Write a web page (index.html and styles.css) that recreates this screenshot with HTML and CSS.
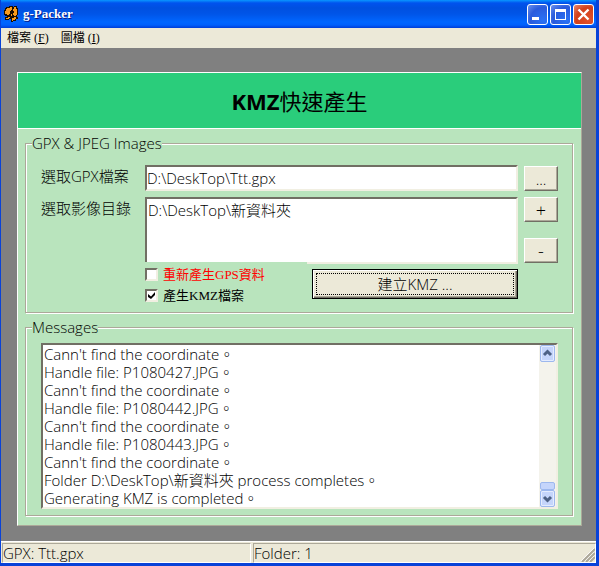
FILE: index.html
```html
<!DOCTYPE html>
<html lang="zh-Hant">
<head>
<meta charset="utf-8">
<meta name="viewport" content="width=device-width, initial-scale=1">
<title>g-Packer</title>
<link rel="stylesheet" href="styles.css">
</head>
<body>
<div class="window">
  <header class="titlebar">
    <svg class="app-icon" viewBox="0 0 16 18" aria-hidden="true">
      <path fill="#1a0d00" d="M1 3h1V2h3V1h4v1h1V1h3v2h1v7h-1v2h1v2h-2v2H9v1H7v-3H5v1H1v-3h2v-1H1v-1H0V5h1z"/>
      <path fill="#f79a1c" d="M2 4h1V3h3V2h2v3H7v1H6v3H5v1H3V9H1V6h1zM10 2h2v2h1v6h-1v1h-2v-1H9V8h1V6H9V4h1zM7 9h1v2H7zM2 13h2v-1h2v1H5v1H2zM8 13h2v-1h2v2h-1v1H9v1H8z"/>
    </svg>
    <h1 class="app-name">g-Packer</h1>
    <div class="window-buttons">
      <button class="win-btn" type="button" aria-label="最小化"><svg viewBox="0 0 21 21"><path fill="#fff" d="M5 13h7v3H5z"/></svg></button>
      <button class="win-btn" type="button" aria-label="最大化"><svg viewBox="0 0 21 21"><path fill="#fff" fill-rule="evenodd" d="M5 5h11v11H5zM6 8v7h9V8z"/></svg></button>
      <button class="win-btn close" type="button" aria-label="關閉"><svg viewBox="0 0 21 21"><path stroke="#fff" stroke-width="2.4" d="M5.500 5.500l10 10M15.500 5.500l-10 10"/></svg></button>
    </div>
  </header>
  <nav class="menubar">
    <button class="menu" type="button">檔案 (<u>F</u>)</button>
    <button class="menu" type="button">圖檔 (<u>I</u>)</button>
  </nav>
  <main class="workspace">
    <div class="panel">
      <h2 class="banner"><b>KMZ</b>快速產生</h2>
      <form class="panel-body">
        <fieldset class="group">
          <legend>GPX &amp; JPEG Images</legend>
          <div class="source-grid">
            <label for="gpx">選取GPX檔案</label>
            <input class="sunken field" id="gpx" type="text" value="D:\DeskTop\Ttt.gpx">
            <button class="btn" type="button">...</button>
            <label for="folders">選取影像目錄</label>
            <select class="sunken folders" id="folders" size="3">
              <option>D:\DeskTop\新資料夾</option>
            </select>
            <div class="stack">
              <button class="btn sign" type="button">+</button>
              <button class="btn sign" type="button">-</button>
            </div>
            <div class="actions">
              <div class="checks">
                <label class="check warn"><input type="checkbox">重新產生GPS資料</label>
                <label class="check"><input type="checkbox" checked>產生KMZ檔案</label>
              </div>
              <button class="btn build" type="button"><span>建立KMZ ...</span></button>
            </div>
          </div>
        </fieldset>
        <fieldset class="group">
          <legend>Messages</legend>
          <div class="sunken log">
            <ul class="lines">
              <li>Cann't find the coordinate。</li>
              <li>Handle file: P1080427.JPG。</li>
              <li>Cann't find the coordinate。</li>
              <li>Handle file: P1080442.JPG。</li>
              <li>Cann't find the coordinate。</li>
              <li>Handle file: P1080443.JPG。</li>
              <li>Cann't find the coordinate。</li>
              <li>Folder D:\DeskTop\新資料夾 process completes。</li>
              <li>Generating KMZ is completed。</li>
            </ul>
            <div class="scrollbar">
              <button class="arrow" type="button" aria-label="向上"><svg viewBox="0 0 13 15"><path d="M3 9l3.500-3.500L10 9"/></svg></button>
              <div class="track"><div class="thumb"></div></div>
              <button class="arrow" type="button" aria-label="向下"><svg viewBox="0 0 13 15"><path d="M3 6l3.500 3.500L10 6"/></svg></button>
            </div>
          </div>
        </fieldset>
      </form>
    </div>
  </main>
  <footer class="statusbar">
    <div class="pane">GPX: Ttt.gpx</div>
    <div class="pane grow">Folder: 1
      <svg class="grip" viewBox="0 0 14 14" aria-hidden="true"><path stroke="#fff" d="M0 13L13 0M4 13l9-9M8 13l5-5"/><path stroke="#aca899" stroke-width="2" d="M1 14L14 1M5 14l9-9M9 14l5-5"/></svg>
    </div>
  </footer>
</div>
</body>
</html>
```

FILE: styles.css
```css
:root {
  --face: #ece9d8;
  --shade: #aca899;
  --dark: #716f64;
  --mint: #b9e4bd;
  --ui: "Open Sans", "Noto Sans CJK TC", sans-serif;
  --serif: "Liberation Serif", "Noto Sans CJK TC", serif;
}

* { box-sizing: border-box; }

body {
  margin: 0;
  font: 300 15px/18px var(--ui);
  color: #000;
}

button, input, select { font: inherit; color: inherit; margin: 0; }

.window {
  display: flex;
  flex-direction: column;
  min-height: 100vh;
  background: #808080;
  border: solid #0842d8;
  border-width: 0 3px 3px 1px;
}

.titlebar {
  display: flex;
  align-items: center;
  height: 28px;
  padding: 0 2px 0 3px;
  background: linear-gradient(#0997ff 0, #0053ee 3px, #0050e0 8px, #0055e8 14px, #0066ff 22px, #0060fc 25px, #003dd7 28px);
}

.app-icon { width: 16px; height: 18px; }

.app-name {
  flex: 1;
  margin: 0 0 0 3px;
  font: bold 13px/18px var(--serif);
  color: #fff;
  text-shadow: 1px 1px #0a1883;
}

.window-buttons { display: flex; gap: 2px; }

.win-btn {
  width: 21px;
  height: 21px;
  padding: 0;
  border: 1px solid #fff;
  border-radius: 3px;
  background: radial-gradient(circle at 80% 80%, #2a72f5, #2a5bdc 60%, #6c93ee);
}
.win-btn.close { background: radial-gradient(circle at 80% 80%, #e0502a, #d2401b 60%, #e88a70); }
.win-btn svg { display: block; width: 21px; height: 21px; margin: -1px; }

.menubar {
  display: flex;
  gap: 12px;
  height: 20px;
  padding-left: 6px;
  background: var(--face);
}
.menu {
  padding: 0;
  border: 0;
  background: none;
  font: 400 12px/20px var(--serif);
}

.workspace {
  flex: 1;
  display: flex;
  padding: 24px 14px 15px 16px;
}

.panel {
  flex: 1;
  background: var(--mint);
  border: 1px solid #fff;
  border-right-color: var(--shade);
  border-bottom-color: var(--shade);
}

.banner {
  margin: 0;
  padding: 14px 0 13px;
  border-bottom: 1px solid #fff;
  background: #2acd7b;
  font: 400 22px/28px var(--ui);
  text-align: center;
}

.panel-body {
  display: flex;
  flex-direction: column;
  gap: 6px;
  padding: 6px 8px 8px 7px;
}

.group {
  min-width: 0;
  margin: 0;
  padding: 7px 14px 6px 15px;
  border: 1px solid var(--shade);
  box-shadow: 1px 1px #fff, inset 1px 1px #fff;
}
.group legend {
  margin-left: -9px;
  padding: 0;
  line-height: 17px;
  background: var(--mint);
}

.source-grid {
  display: grid;
  grid-template-columns: 98px 1fr 34px;
  column-gap: 6px;
  padding-top: 6px;
}
.source-grid > label { padding-top: 2px; }

.sunken {
  background: #fff;
  border: 2px solid;
  border-color: var(--dark) #f1efe2 #f1efe2 var(--dark);
  border-radius: 0;
  outline: 0;
}

.field { width: 100%; height: 26px; margin-bottom: 6px; padding: 0; }

.folders {
  width: 100%;
  height: 67px;
  padding: 0;
  overflow: hidden;
}
.folders option {
  min-height: 18px;
  padding: 0 1px;
  font: 300 15px/18px var(--ui);
}

.btn {
  height: 25px;
  padding: 0;
  border: 1px solid;
  border-color: #fff var(--dark) var(--dark) #fff;
  box-shadow: inset -1px -1px var(--shade);
  background: var(--face);
  line-height: 18px;
}
.source-grid > .btn { margin-top: 1px; }
.btn.sign { font-size: 18px; }

.stack {
  display: flex;
  flex-direction: column;
  justify-content: space-between;
  padding-bottom: 1px;
}

.actions {
  grid-column: 2;
  display: flex;
  justify-content: space-between;
  margin-top: -2px;
}

.checks {
  z-index: 1;
  width: 162px;
  padding-top: 2px;
  background: var(--mint);
}
.check {
  display: flex;
  align-items: center;
  gap: 5px;
  height: 21px;
  font: 400 13px/20px var(--serif);
}
.check.warn { color: #f00; }
.check input {
  appearance: none;
  display: grid;
  place-items: center;
  width: 13px;
  height: 13px;
  background: #fff;
  border: 2px solid;
  border-color: var(--dark) #f1efe2 #f1efe2 var(--dark);
}
.check input:checked::before {
  content: "";
  width: 7px;
  height: 7px;
  background: #000;
  clip-path: polygon(0 28%, 43% 64%, 100% 0, 100% 43%, 43% 100%, 0 71%);
}

.build {
  width: 206px;
  height: 30px;
  margin-top: 7px;
  padding: 3px;
  border-color: #000;
  box-shadow: inset 1px 1px #fff, inset -1px -1px var(--dark), inset -2px -2px var(--shade);
}
.build span { display: block; border: 1px dotted #000; line-height: 20px; }

.log { display: flex; }
.lines {
  flex: 1;
  margin: 0;
  padding: 0 1px;
  list-style: none;
}

.scrollbar {
  display: flex;
  flex-direction: column;
  width: 17px;
  padding: 0 1px;
  background: #f4f3ec;
}
.arrow {
  width: 15px;
  height: 17px;
  padding: 0;
  border: 1px solid #9db8ee;
  border-radius: 2px;
  background: #c5d5fb;
  box-shadow: inset 0 0 0 1px #e4ecfe;
}
.arrow svg { display: block; width: 13px; fill: none; stroke: #4d6185; stroke-width: 3; }
.track { flex: 1; display: flex; align-items: flex-end; }
.thumb {
  width: 15px;
  height: 8px;
  border: 1px solid #9db8ee;
  border-radius: 2px;
  background: #c5d5fb;
}

.statusbar {
  display: flex;
  gap: 2px;
  padding: 1px 0 0 1px;
  background: var(--face);
  border-top: 1px solid #fff;
}
.pane {
  width: 249px;
  height: 20px;
  border: 1px solid;
  border-color: var(--shade) #fff #fff var(--shade);
}
.pane.grow {
  flex: 1;
  display: flex;
  justify-content: space-between;
}
.grip { width: 14px; height: 14px; align-self: flex-end; }
```
